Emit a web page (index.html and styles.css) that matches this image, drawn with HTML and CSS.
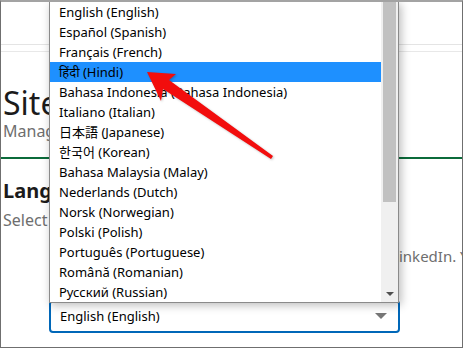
FILE: index.html
```html
<!DOCTYPE html>
<html lang="en">

<head>
    <meta charset="UTF-8">
    <meta name="viewport" content="width=device-width, initial-scale=1.0">
    <title>Site Settings</title>
    <link rel="stylesheet" href="styles.css">
</head>

<body>
<div class="frame">
    <div class="topbar"></div>
    <div class="subbar"></div>

    <div class="content">
        <h1>Site Settings</h1>
        <p class="lead">Manage your account preferences</p>
        <hr class="rule">

        <h2>Language</h2>
        <p class="hint">Select the language you want to use</p>
        <p class="hint note">Changing this updates every page on LinkedIn. You can switch back at any time.</p>

        <div class="select">
            <span>English (English)</span>
            <span class="caret"></span>
        </div>
    </div>

    <!-- open list of the language select -->
    <div class="dropdown">
        <ul class="options">
            <li>English (English)</li>
            <li>Español (Spanish)</li>
            <li>Français (French)</li>
            <li class="active">हिंदी (Hindi)</li>
            <li>Bahasa Indonesia (Bahasa Indonesia)</li>
            <li>Italiano (Italian)</li>
            <li>日本語 (Japanese)</li>
            <li>한국어 (Korean)</li>
            <li>Bahasa Malaysia (Malay)</li>
            <li>Nederlands (Dutch)</li>
            <li>Norsk (Norwegian)</li>
            <li>Polski (Polish)</li>
            <li>Português (Portuguese)</li>
            <li>Română (Romanian)</li>
            <li>Русский (Russian)</li>
        </ul>
        <div class="scrollbar">
            <div class="thumb"></div>
            <span class="down"></span>
        </div>
    </div>

    <!-- red annotation arrow -->
    <svg class="pointer" width="463" height="348" viewBox="0 0 463 348">
        <polygon points="147,72 176,74 169,80 273,156 271,159 163,89 161,101" fill="#f20d0d"/>
    </svg>
</div>
</body>

</html>
```

FILE: styles.css
```css
* {
    box-sizing: border-box;
    margin: 0;
    padding: 0;
}

body {
    background-color: #fff;
    font-family: "Noto Sans", "Noto Sans Devanagari", "Noto Sans CJK JP", sans-serif;
}

.frame {
    position: relative;
    width: 463px;
    height: 348px;
    overflow: hidden;
    background-color: #fff;
    border: 1px solid #6f6f6f;
    border-top: 2px solid #a3a3a3;
}

.topbar {
    height: 43px;
    border-bottom: 1px solid #e4e4e4;
}

.subbar {
    height: 7px;
    border-bottom: 1px solid #e8e8e8;
}

.content {
    padding: 34px 0 0 2px;
}

h1 {
    font-size: 32px;
    font-weight: 400;
    line-height: 34px;
    color: #1b1b1b;
    white-space: nowrap;
}

.lead {
    font-size: 16px;
    line-height: 22px;
    color: #6e6e6e;
}

.rule {
    border: none;
    height: 2px;
    margin: 15px 0 0 -2px;
    background-color: #0b6b3a;
}

h2 {
    font-size: 20px;
    font-weight: 700;
    line-height: 28px;
    margin-top: 18px;
    color: #1b1b1b;
}

.hint {
    font-size: 16px;
    line-height: 22px;
    color: #6e6e6e;
    margin-top: 4px;
    white-space: nowrap;
}

.note {
    font-size: 15px;
    margin-top: 14px;
    margin-left: 122px;
}

.select {
    display: flex;
    align-items: center;
    justify-content: space-between;
    width: 351px;
    height: 33px;
    margin: 33px 0 0 46px;
    padding: 0 11px 2px 9px;
    border: 2px solid #0067b8;
    border-radius: 4px;
    font-size: 13px;
    color: #000;
}

.caret {
    width: 0;
    height: 0;
    border-left: 6px solid transparent;
    border-right: 6px solid transparent;
    border-top: 6px solid #767676;
}

.dropdown {
    position: absolute;
    top: 0;
    left: 48px;
    width: 350px;
    height: 301px;
    display: flex;
    background-color: #fff;
    border: 1px solid #8a8a8a;
    border-top: none;
    box-shadow: 2px 2px 9px rgba(0, 0, 0, 0.28);
}

.options {
    list-style: none;
    flex: 1;
}

.options li {
    height: 20px;
    line-height: 20px;
    padding-left: 9px;
    font-size: 13px;
    color: #000;
    white-space: nowrap;
}

.options li.active {
    background-color: #1e90ff;
}

.scrollbar {
    position: relative;
    width: 17px;
    background-color: #f0f0f0;
}

.thumb {
    width: 13px;
    height: 200px;
    margin-left: 2px;
    background-color: #c1c1c1;
}

.down {
    position: absolute;
    left: 5px;
    bottom: 6px;
    width: 0;
    height: 0;
    border-left: 4px solid transparent;
    border-right: 4px solid transparent;
    border-top: 4px solid #505050;
}

.pointer {
    position: absolute;
    top: -2px;
    left: -1px;
    pointer-events: none;
    filter: drop-shadow(1px 1px 1px rgba(0, 0, 0, 0.25));
}
```
